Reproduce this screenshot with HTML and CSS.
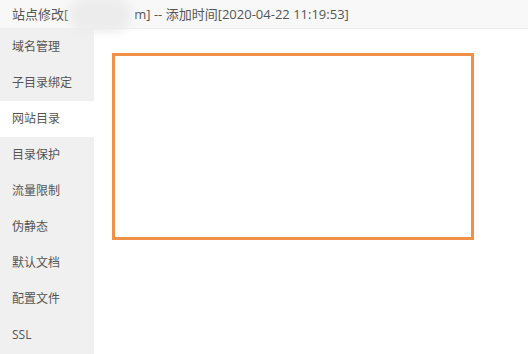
FILE: index.html
```html
<!DOCTYPE html>
<html>
<head>
<meta charset="utf-8">
<link rel="stylesheet" href="styles.css">
</head>
<body>
<div class="page">
  <div class="title">
    <span>站点修改[</span><span class="masked"><span class="blur"></span></span><span>m] -- 添加时间[2020-04-22 11:19:53]</span>
  </div>
  <div class="body">
    <ul class="tabs">
      <li>域名管理</li>
      <li>子目录绑定</li>
      <li class="on">网站目录</li>
      <li>目录保护</li>
      <li>流量限制</li>
      <li>伪静态</li>
      <li>默认文档</li>
      <li>配置文件</li>
      <li>SSL</li>
    </ul>
    <div class="content">
      <div class="frame"></div>
    </div>
  </div>
</div>
</body>
</html>
```
FILE: styles.css
```css
* { box-sizing: border-box; }
html, body { margin: 0; padding: 0; background: #fff; }
body {
  font-family: "Open Sans", "Noto Sans CJK SC", sans-serif;
  color: #333;
  width: 528px;
  height: 354px;
  overflow: hidden;
}
.page { display: flex; flex-direction: column; height: 354px; }
.title {
  height: 29px;
  line-height: 28px;
  padding-left: 12px;
  font-size: 13px;
  color: #555;
  background: #f8f8f8;
  border-bottom: 1px solid #eee;
  white-space: nowrap;
  display: flex;
}
.masked {
  position: relative;
  display: inline-block;
  width: 66px;
}
.blur {
  position: absolute;
  left: 1px;
  top: -2px;
  width: 62px;
  height: 34px;
  background: #ececec;
  border-radius: 16px;
  filter: blur(4px);
}
.body { flex: 1; display: flex; }
.tabs {
  list-style: none;
  margin: 0;
  padding: 0;
  width: 94px;
  background: #f0f0f0;
  font-size: 12px;
  color: #555;
}
.tabs li {
  height: 36px;
  line-height: 36px;
  padding-left: 12px;
}
.tabs li.on { background: #fff; }
.content { flex: 1; padding: 24px 0 0 18px; }
.frame {
  width: 362px;
  height: 187px;
  border: 3px solid #f0914a;
}
```
